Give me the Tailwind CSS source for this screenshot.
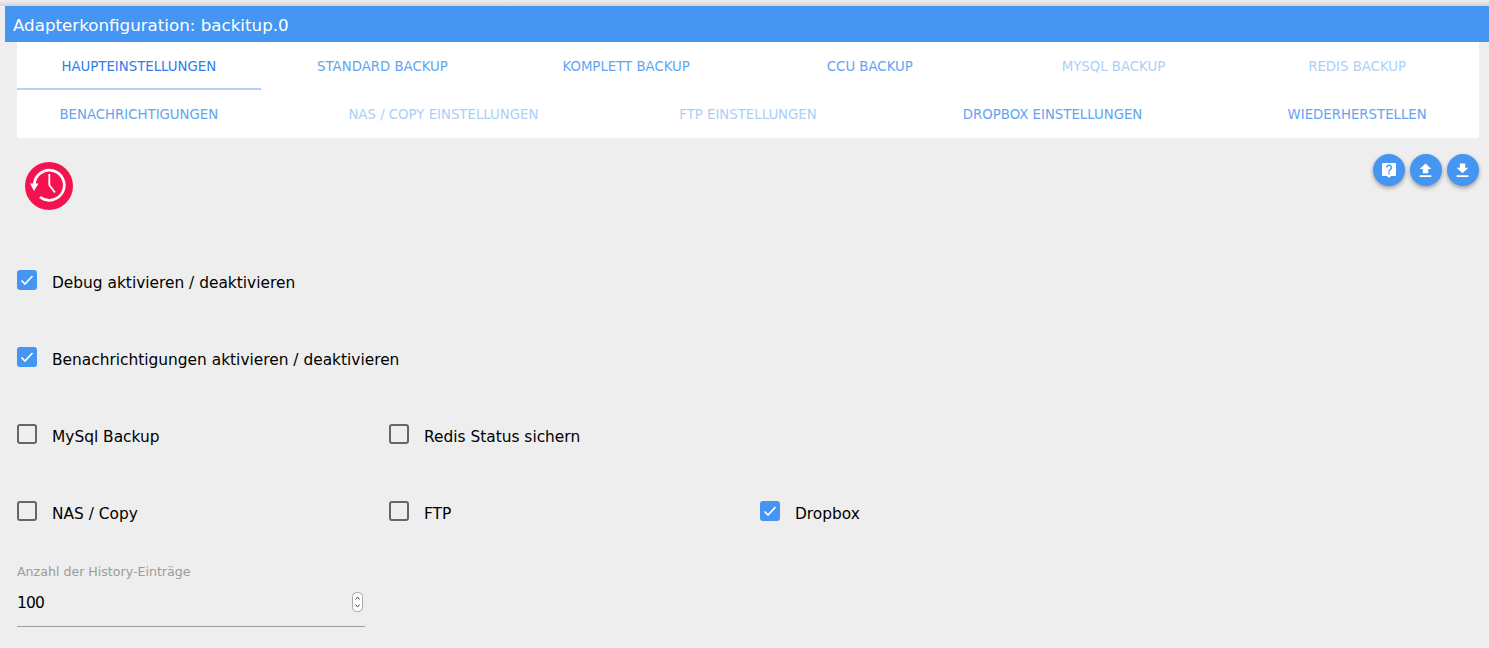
<!DOCTYPE html>
<html>
<head>
    <title>Adapterkonfiguration</title>
    <script src="https://cdn.jsdelivr.net/npm/@tailwindcss/browser@4"></script>
</head>
<body class="h-[648px] overflow-hidden bg-[#eeeeee] [font-family:'DejaVu_Sans',sans-serif] text-black">
<div class="h-[6px] bg-linear-to-b from-[#eeeeee] to-[#d6d6d6]"></div>

<!-- Title bar -->
<div class="ml-[5px] h-9 bg-[#4496f2] pl-2 text-[16.7px] leading-[38px] text-white">Adapterkonfiguration: backitup.0</div>

<div class="pl-[17px] pr-[10px]">
    <!-- Tabs -->
    <div class="flex flex-wrap justify-between bg-white text-center text-[13.3px] leading-[49px]">
        <div class="h-12 w-1/6 border-b-2 border-[#aed2f8] text-[#2f7de6]">HAUPTEINSTELLUNGEN</div>
        <div class="h-12 w-1/6 text-[#62a4f0]">STANDARD BACKUP</div>
        <div class="h-12 w-1/6 text-[#62a4f0]">KOMPLETT BACKUP</div>
        <div class="h-12 w-1/6 text-[#62a4f0]">CCU BACKUP</div>
        <div class="h-12 w-1/6 text-[#abcff7]">MYSQL BACKUP</div>
        <div class="h-12 w-1/6 text-[#abcff7]">REDIS BACKUP</div>
        <div class="h-12 w-1/6 text-[#62a4f0]">BENACHRICHTIGUNGEN</div>
        <div class="h-12 w-1/6 text-[#abcff7]">NAS / COPY EINSTELLUNGEN</div>
        <div class="h-12 w-1/6 text-[#abcff7]">FTP EINSTELLUNGEN</div>
        <div class="h-12 w-1/6 text-[#62a4f0]">DROPBOX EINSTELLUNGEN</div>
        <div class="h-12 w-1/6 text-[#62a4f0]">WIEDERHERSTELLEN</div>
    </div>

    <!-- Logo and actions -->
    <div class="flex h-[112px] justify-between">
        <svg class="ml-2 mt-6 h-12 w-12" viewBox="0 0 48 48">
            <circle cx="24" cy="24" r="24" fill="#f5134f"/>
            <path d="M9.3 23A15 15 0 1 1 15 35" fill="none" stroke="#fff" stroke-width="2.7"/>
            <path d="M5 21.5h8.5L9 29z" fill="#fff"/>
            <path d="M24.3 12V23L30 30.5" fill="none" stroke="#fff" stroke-width="1.8"/>
        </svg>
        <div class="mt-4 flex gap-[5px]">
            <div class="flex h-8 w-8 items-center justify-center rounded-full bg-[#4496f2] shadow-[0_2px_4px_rgba(0,0,0,0.35)]">
                <svg class="h-4 w-4" viewBox="0 0 16 16">
                    <path d="M2 1h12a1 1 0 0 1 1 1v11a1 1 0 0 1-1 1h-4l-2 2-2-2H2a1 1 0 0 1-1-1V2a1 1 0 0 1 1-1z" fill="#fff"/>
                    <path d="M5.6 5.6A2.4 2.4 0 1 1 9.5 7.5C8.5 8.2 8 8.6 8 9.8" fill="none" stroke="#4496f2" stroke-width="1.5"/>
                    <rect x="7.2" y="10.6" width="1.6" height="1.6" fill="#4496f2"/>
                </svg>
            </div>
            <div class="flex h-8 w-8 items-center justify-center rounded-full bg-[#4496f2] shadow-[0_2px_4px_rgba(0,0,0,0.35)]">
                <svg class="h-[15px] w-[15px] -translate-x-px" viewBox="0 0 14 14"><path d="M4.5 9.5V5.5H1.5L7 0.5l5.5 5H9.5v4zM1.5 11.5h11V13h-11z" fill="#fff"/></svg>
            </div>
            <div class="flex h-8 w-8 items-center justify-center rounded-full bg-[#4496f2] shadow-[0_2px_4px_rgba(0,0,0,0.35)]">
                <svg class="h-[15px] w-[15px] -translate-x-px" viewBox="0 0 14 14"><path d="M4.5 0.5h5v4h3L7 9.5l-5.5-5h3zM1.5 11.5h11V13h-11z" fill="#fff"/></svg>
            </div>
        </div>
    </div>

    <!-- Options -->
    <div class="grid grid-cols-[372px_371px_1fr] grid-rows-[77px_77px_77px_77px] text-[15.4px]">
        <label class="col-span-3 flex items-start gap-[15px] pt-5 leading-5">
            <span class="flex h-5 w-5 items-center justify-center rounded-[3px] bg-[#4496f2]"><svg class="h-4 w-4" viewBox="0 0 16 16"><path d="M2.5 8.5l3.5 3.5 7.5-8" fill="none" stroke="#fff" stroke-width="1.7"/></svg></span>
            <span class="mt-[3px]">Debug aktivieren / deaktivieren</span>
        </label>
        <label class="col-span-3 flex items-start gap-[15px] pt-5 leading-5">
            <span class="flex h-5 w-5 items-center justify-center rounded-[3px] bg-[#4496f2]"><svg class="h-4 w-4" viewBox="0 0 16 16"><path d="M2.5 8.5l3.5 3.5 7.5-8" fill="none" stroke="#fff" stroke-width="1.7"/></svg></span>
            <span class="mt-[3px]">Benachrichtigungen aktivieren / deaktivieren</span>
        </label>
        <label class="flex items-start gap-[15px] pt-5 leading-5">
            <span class="h-5 w-5 rounded-[3px] border-2 border-[#666666]"></span>
            <span class="mt-[3px]">MySql Backup</span>
        </label>
        <label class="col-span-2 flex items-start gap-[15px] pt-5 leading-5">
            <span class="h-5 w-5 rounded-[3px] border-2 border-[#666666]"></span>
            <span class="mt-[3px]">Redis Status sichern</span>
        </label>
        <label class="flex items-start gap-[15px] pt-5 leading-5">
            <span class="h-5 w-5 rounded-[3px] border-2 border-[#666666]"></span>
            <span class="mt-[3px]">NAS / Copy</span>
        </label>
        <label class="flex items-start gap-[15px] pt-5 leading-5">
            <span class="h-5 w-5 rounded-[3px] border-2 border-[#666666]"></span>
            <span class="mt-[3px]">FTP</span>
        </label>
        <label class="flex items-start gap-[15px] pt-5 leading-5">
            <span class="flex h-5 w-5 items-center justify-center rounded-[3px] bg-[#4496f2]"><svg class="h-4 w-4" viewBox="0 0 16 16"><path d="M2.5 8.5l3.5 3.5 7.5-8" fill="none" stroke="#fff" stroke-width="1.7"/></svg></span>
            <span class="mt-[3px]">Dropbox</span>
        </label>
    </div>

    <!-- History count -->
    <div class="mt-[6px] w-[348px]">
        <div class="text-[12.6px] leading-4 text-[#9b9b9b]">Anzahl der History-Einträge</div>
        <div class="mt-[11px] flex h-[36px] items-start justify-between border-b border-[#9e9e9e] pt-[2px] text-[15.5px] leading-5 tracking-[-0.8px]">
            <span>100</span>
            <svg class="mr-[2px] -mt-[1px] h-[20px] w-[11px]" viewBox="0 0 11 20">
                <rect x="0.5" y="0.5" width="10" height="19" rx="4" fill="#fff" stroke="#a8a8a8"/>
                <path d="M3.5 7.5l2-2.5 2 2.5M3.5 12.5l2 2.5 2-2.5" fill="none" stroke="#444" stroke-width="1"/>
            </svg>
        </div>
    </div>
</div>
</body>
</html>
